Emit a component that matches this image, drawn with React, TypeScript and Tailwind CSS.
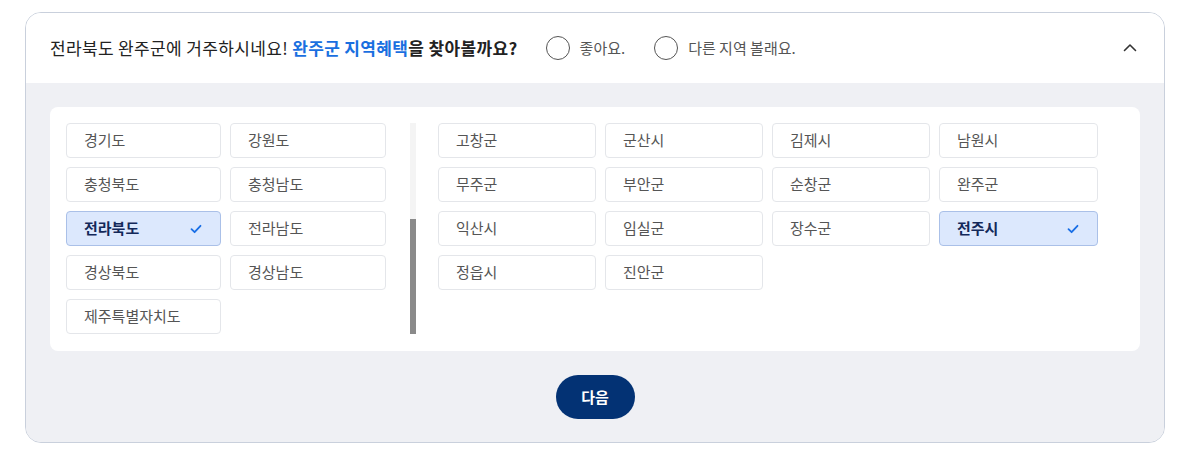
import { useState } from "react";

const PROVINCES = ["경기도", "강원도", "충청북도", "충청남도", "전라북도", "전라남도", "경상북도", "경상남도", "제주특별자치도"];
const CITIES = ["고창군", "군산시", "김제시", "남원시", "무주군", "부안군", "순창군", "완주군", "익산시", "임실군", "장수군", "전주시", "정읍시", "진안군"];

function Check() {
  return (
    <svg width="12" height="10" viewBox="0 0 12 10" fill="none">
      <path d="M1.5 5.2L4.6 8.2L10.5 1.8" stroke="#1a6fe6" strokeWidth="1.8" strokeLinecap="round" strokeLinejoin="round" />
    </svg>
  );
}

function Chip({ label, active, onClick }: { label: string; active: boolean; onClick: () => void }) {
  return (
    <button
      onClick={onClick}
      className={`h-[35px] flex items-center justify-between pl-[17px] pr-[18px] rounded-[4px] border text-[15px] text-left ${
        active ? "bg-[#dce8fd] border-[#aac0e8] text-[#13285a] font-bold" : "bg-white border-[#e4e6ea] text-[#555]"
      }`}
    >
      <span>{label}</span>
      {active && <Check />}
    </button>
  );
}

export default function App() {
  const [prov, setProv] = useState("전라북도");
  const [city, setCity] = useState("전주시");
  const [answer, setAnswer] = useState<"" | "yes" | "no">("");

  return (
    <div className="min-h-screen bg-white pt-3 px-[25px] font-['Noto_Sans_CJK_KR','Noto_Sans',sans-serif]">
      <div className="w-[1140px] rounded-[16px] border border-[#c9d0dc] overflow-hidden">
        {/* Header */}
        <div className="h-[70px] bg-white flex items-center pl-[24px] pr-[26px]">
          <p className="text-[17px] text-[#222] tracking-[0.35px]">
            전라북도 완주군에 거주하시네요! <b className="text-[#1a6fe0]">완주군 지역혜택</b>
            <b className="text-[#222]">을 찾아볼까요?</b>
          </p>
          <div className="flex items-center ml-[28px] gap-[10px]">
            {[
              { id: "yes" as const, label: "좋아요." },
              { id: "no" as const, label: "다른 지역 볼래요." },
            ].map(r => (
              <button key={r.id} onClick={() => setAnswer(r.id)} className="flex items-center gap-[10px] mr-[19px] text-[15px] text-[#555]">
                <span className="w-[24px] h-[24px] rounded-full border border-[#555] bg-white flex items-center justify-center">
                  {answer === r.id && <span className="w-[12px] h-[12px] rounded-full bg-[#1a6fe0]" />}
                </span>
                {r.label}
              </button>
            ))}
          </div>
          <button className="ml-auto text-[#333]">
            <svg width="16" height="16" viewBox="0 0 16 16" fill="none">
              <path d="M2.5 10.5L8 5L13.5 10.5" stroke="currentColor" strokeWidth="1.6" strokeLinecap="round" strokeLinejoin="round" />
            </svg>
          </button>
        </div>

        {/* Body */}
        <div className="bg-[#eff0f4] px-[24px] pt-[24px] pb-[23px] flex flex-col items-center">
          <div className="w-full bg-white rounded-[8px] pt-[16px] pb-[17px] pl-[16px] flex">
            <div className="grid grid-cols-[155px_156px] gap-[9px] content-start">
              {PROVINCES.map(p => (
                <Chip key={p} label={p} active={prov === p} onClick={() => setProv(p)} />
              ))}
            </div>
            <div className="ml-[24px] w-[6px] bg-[#f4f4f4] flex flex-col">
              <div className="h-[96px]" />
              <div className="flex-1 bg-[#8a8a8a]" />
            </div>
            <div className="ml-[22px] grid grid-cols-[158px_158px_158px_159px] gap-[9px] content-start">
              {CITIES.map(c => (
                <Chip key={c} label={c} active={city === c} onClick={() => setCity(c)} />
              ))}
            </div>
          </div>
          <button className="mt-[24px] w-[79px] h-[44px] rounded-full bg-[#033274] text-white text-[15px] font-bold">
            다음
          </button>
        </div>
      </div>
    </div>
  );
}
